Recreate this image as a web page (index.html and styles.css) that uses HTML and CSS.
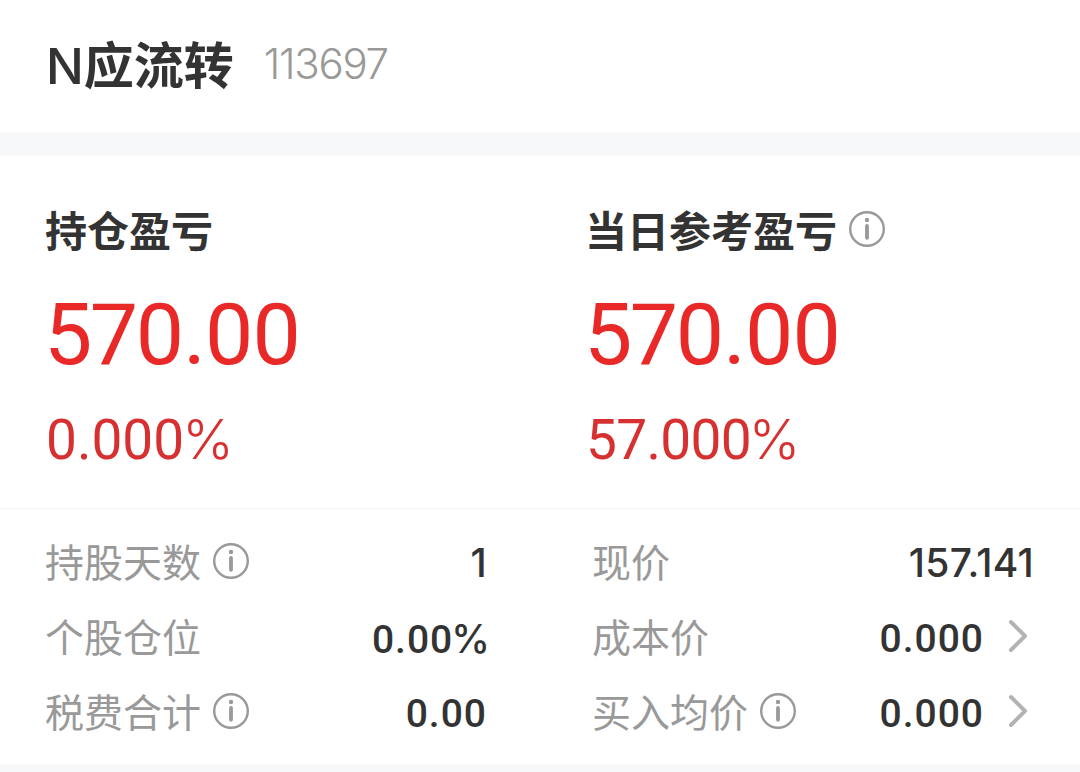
FILE: index.html
```
<!DOCTYPE html>
<html lang="zh-CN">
<head>
    <meta charset="utf-8">
    <title>N应流转 113697</title>
    <link rel="stylesheet" href="styles.css">
</head>
<body>
    <svg class="defs" width="0" height="0">
        <symbol id="info" viewBox="0 0 36 36">
            <circle cx="18" cy="18" r="16.8" fill="none" stroke="currentColor" stroke-width="2.4"/>
            <circle cx="18" cy="9" r="2.2" fill="currentColor"/>
            <path d="M18 15V26.8" fill="none" stroke="currentColor" stroke-width="3.8" stroke-linecap="round"/>
        </symbol>
        <symbol id="arrow" viewBox="0 0 20 34">
            <path d="M3 3L17 17L3 31" fill="none" stroke="currentColor" stroke-width="4" stroke-linecap="round" stroke-linejoin="round"/>
        </symbol>
    </svg>
    <header class="header">
        <h1 class="name"><span class="prefix">N</span>应流转</h1>
        <span class="code">113697</span>
    </header>
    <section class="summary">
        <div class="profit">
            <h2 class="profit-title">持仓盈亏</h2>
            <div class="amount">57<span class="digits">0.00</span></div>
            <div class="percent">0.000<span class="sign">%</span></div>
        </div>
        <div class="profit">
            <h2 class="profit-title">当日参考盈亏<svg class="info"><use href="#info"/></svg></h2>
            <div class="amount">57<span class="digits">0.00</span></div>
            <div class="percent tight">57.000<span class="sign">%</span></div>
        </div>
    </section>
    <section class="details">
        <div class="column">
            <div class="row">
                <span class="label">持股天数</span><svg class="info"><use href="#info"/></svg>
                <span class="value price">1</span>
            </div>
            <div class="row">
                <span class="label">个股仓位</span>
                <span class="value ratio">0.00<span class="sign">%</span></span>
            </div>
            <div class="row">
                <span class="label">税费合计</span><svg class="info"><use href="#info"/></svg>
                <span class="value">0.00</span>
            </div>
        </div>
        <div class="column">
            <div class="row">
                <span class="label">现价</span>
                <span class="value price">157.141</span>
            </div>
            <div class="row">
                <span class="label">成本价</span>
                <span class="value">0.000</span><svg class="arrow"><use href="#arrow"/></svg>
            </div>
            <div class="row">
                <span class="label">买入均价</span><svg class="info"><use href="#info"/></svg>
                <span class="value">0.000</span><svg class="arrow"><use href="#arrow"/></svg>
            </div>
        </div>
    </section>
</body>
</html>
```
FILE: styles.css
```
* {
    box-sizing: border-box;
}
body {
    margin: 0;
    height: 772px;
    overflow: hidden;
    background: #f7f8fa;
    color: #333;
    font-family: Roboto, "Noto Sans CJK SC", sans-serif;
}
h1, h2 {
    margin: 0;
}
.defs {
    position: absolute;
}
.header {
    display: flex;
    align-items: center;
    height: 132px;
    padding: 0 46px 5px;
    background: #fff;
}
.name {
    font: 700 50px/60px "Noto Sans CJK SC", sans-serif;
}
.prefix {
    font-family: Inter, sans-serif;
    font-weight: 500;
}
.code {
    margin-left: 30px;
    color: #999;
    font: 300 42px/60px Inter, sans-serif;
    letter-spacing: -1.3px;
}
.summary {
    display: grid;
    grid-template-columns: 540px 540px;
    height: 352px;
    margin-top: 24px;
    padding: 42px 0 0 45px;
    background: #fff;
}
.profit-title {
    display: flex;
    align-items: center;
    height: 62px;
    font: 700 42px/62px "Noto Sans CJK SC", sans-serif;
}
.amount {
    margin: 25px 0 0 -1px;
    color: #e92828;
    font-size: 86px;
    line-height: 100px;
    letter-spacing: -2.5px;
}
.digits {
    letter-spacing: -0.8px;
}
.percent {
    margin-top: 20px;
    padding-left: 1px;
    color: #d63030;
    font-size: 55px;
    line-height: 68px;
}
.tight {
    letter-spacing: -0.7px;
}
.sign {
    margin-left: -2px;
    font-family: Inter, sans-serif;
    letter-spacing: 0;
}
.percent .sign {
    font-weight: 350;
}
.details {
    display: grid;
    grid-template-columns: 442px 442px;
    justify-content: space-between;
    height: 256px;
    padding: 15px 46px 0 45px;
    border-top: 1px solid #f3f4f5;
    background: #fff;
}
.row {
    display: flex;
    align-items: center;
    height: 75px;
}
.label {
    padding-bottom: 2px;
    color: #999;
    font: 400 39px/73px "Noto Sans CJK SC", sans-serif;
}
.info {
    flex: none;
    width: 36px;
    height: 36px;
    margin-left: 12px;
    color: #999;
}
.row .info {
    margin-bottom: 1px;
}
.value {
    margin-left: auto;
    padding-top: 4px;
    font-size: 39px;
    font-weight: 500;
    letter-spacing: 1px;
}
.ratio {
    margin-right: -3px;
}
.price {
    padding-top: 2px;
    font-family: Inter, sans-serif;
    letter-spacing: 0.3px;
}
.arrow {
    flex: none;
    width: 20px;
    height: 34px;
    margin: 0 6px 1px 24px;
    color: #b3b3b3;
}
```
